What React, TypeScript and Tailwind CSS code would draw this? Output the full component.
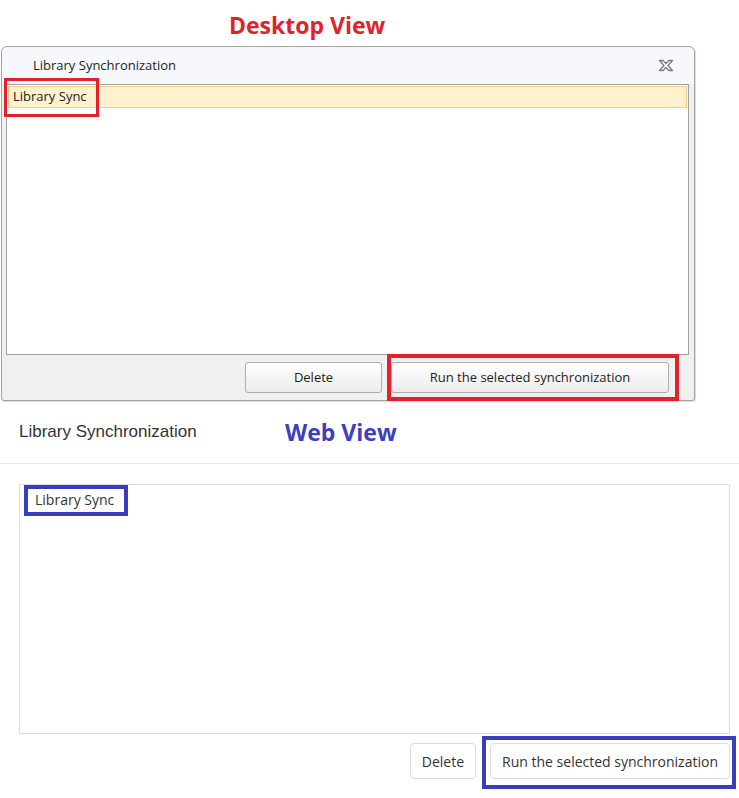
import React from "react";

const segoe = { fontFamily: '"Open Sans", "Noto Sans", sans-serif' };

function CloseIcon() {
  return (
    <svg width="16" height="13" viewBox="0 0 16 13">
      <path
        d="M1.5 1.5 H5 L8 4.5 L11 1.5 H14.5 L10 6.5 L14.5 11.5 H11 L8 8.5 L5 11.5 H1.5 L6 6.5 Z"
        fill="#fdfdfd"
        stroke="#7a7a7a"
        strokeWidth="1.3"
        strokeLinejoin="round"
      />
    </svg>
  );
}

export default function App() {
  return (
    <div className="relative w-[739px] h-[798px] bg-white overflow-hidden" style={segoe}>
      {/* Desktop label */}
      <div className="h-[46px] pl-[229px] pt-[10px]">
        <span className="text-[23px] font-bold leading-[30px] text-[#e1222b]">Desktop View</span>
      </div>

      {/* Desktop window */}
      <div className="ml-[1px] w-[694px] h-[355px] flex flex-col bg-[#f0f0f0] border border-[#a3a3a3] rounded-t-[6px] rounded-b-[3px] shadow-[1px_1px_1px_rgba(0,0,0,0.15)]">
        <div className="h-[37px] flex items-center justify-between pl-[31px] pr-[20px] bg-[#f6f8fb] rounded-t-[6px]">
          <span className="text-[13px] text-[#1e1e1e]">Library Synchronization</span>
          <CloseIcon />
        </div>
        <div className="ml-[4px] mr-[5px] h-[271px] bg-white border border-[#a0a0a0] pt-[1px] px-[1px]">
          <div className="h-[22px] flex items-center pl-[4px] bg-[#fff2cc] border border-[#f3cd8b]">
            <span className="text-[13px] text-[#1e1e1e]">Library Sync</span>
          </div>
        </div>
        <div className="flex-1 flex justify-end items-start gap-[9px] pt-[7px] pr-[25px]">
          <button className="w-[137px] h-[31px] rounded-[3px] border border-[#adadad] bg-gradient-to-b from-[#ffffff] to-[#ececec] text-[13px] text-[#1e1e1e]">
            Delete
          </button>
          <button className="w-[278px] h-[31px] rounded-[3px] border border-[#adadad] bg-gradient-to-b from-[#ffffff] to-[#ececec] text-[13px] text-[#1e1e1e]">
            Run the selected synchronization
          </button>
        </div>
      </div>

      {/* Web header */}
      <div className="h-[63px] flex items-center pl-[19px] border-b border-[#e6e6e6]">
        <span className="w-[266px] text-[17px] text-[#333333]" style={{ fontFamily: '"Liberation Sans", Arial, sans-serif' }}>
          Library Synchronization
        </span>
        <span className="text-[23px] font-bold text-[#3c40c0]">Web View</span>
      </div>

      {/* Web list */}
      <div className="mt-[20px] ml-[19px] w-[711px] h-[250px] border border-[#dedede] pt-[2px] pl-[15px]">
        <span className="text-[14px] text-[#333333]">Library Sync</span>
      </div>

      <div className="mt-[9px] flex justify-end gap-[14px] pr-[9px]">
        <button className="h-[36px] px-[11px] rounded-[4px] border border-[#dddddd] bg-white text-[14px] text-[#333333]">
          Delete
        </button>
        <button className="h-[36px] px-[11px] rounded-[4px] border border-[#dddddd] bg-white text-[14px] text-[#333333]">
          Run the selected synchronization
        </button>
      </div>

      {/* Annotation boxes */}
      <div className="absolute left-[4px] top-[78px] w-[95px] h-[39px] border-[3px] border-[#e3202b]" />
      <div className="absolute left-[387px] top-[354px] w-[292px] h-[47px] border-[4px] border-[#e3202b]" />
      <div className="absolute left-[24px] top-[485px] w-[104px] h-[31px] border-[4px] border-[#3a3dbd]" />
      <div className="absolute left-[482px] top-[736px] w-[254px] h-[53px] border-[4px] border-[#3a3dbd]" />
    </div>
  );
}
